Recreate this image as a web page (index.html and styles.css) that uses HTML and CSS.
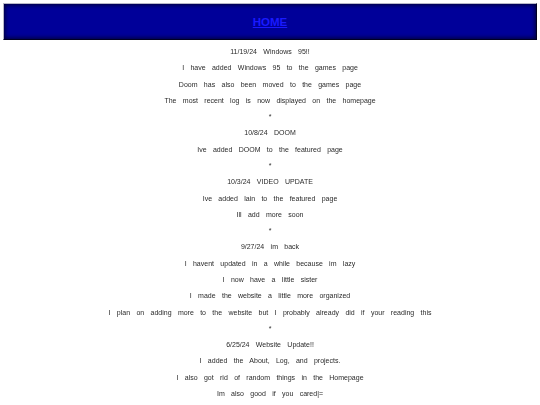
FILE: index.html
```html
<!DOCTYPE html>
<html>
<head>
<meta charset="utf-8">
<link rel="stylesheet" href="styles.css">
</head>
<body>
<header class="topbar"><a class="home" href="#">HOME</a></header>
<main class="log">
<p>11/19/24 Windows 95!!</p>
<p>I have added Windows 95 to the games page</p>
<p>Doom has also been moved to the games page</p>
<p>The most recent log is now displayed on the homepage</p>
<p>*</p>
<p>10/8/24 DOOM</p>
<p>Ive added DOOM to the featured page</p>
<p>*</p>
<p>10/3/24 VIDEO UPDATE</p>
<p>Ive added lain to the featured page</p>
<p>Ill add more soon</p>
<p>*</p>
<p>9/27/24 im back</p>
<p>I havent updated in a while because im lazy</p>
<p>I now have a little sister</p>
<p>I made the website a little more organized</p>
<p>I plan on adding more to the website but I probably already did if your reading this</p>
<p>*</p>
<p>6/25/24 Website Update!!</p>
<p>I added the About, Log, and projects.</p>
<p>I also got rid of random things in the Homepage</p>
<p>Im also good if you cared|=</p>
</main>
</body>
</html>
```
FILE: styles.css
```css
html, body { margin: 0; padding: 0; background: #fff; }
body { padding: 3px; font-family: "Liberation Sans", Arial, sans-serif; }
.topbar {
  height: 35px;
  background: #000099;
  border-top: 1px solid #b8b8c8;
  border-left: 1px solid #b8b8c8;
  border-right: 1px solid #000022;
  border-bottom: 1px solid #000022;
  box-shadow: inset 0 0 4px 1px #000033;
  display: flex;
  align-items: center;
  justify-content: center;
}
.home {
  color: #1a1aff;
  font-size: 11.5px;
  font-weight: bold;
  text-decoration: underline;
}
.log {
  padding-top: 4px;
  text-align: center;
  will-change: transform;
}
.log p {
  margin: 0;
  font-size: 7px;
  line-height: 16.28px;
  word-spacing: 4.4px;
  color: #2a2a2a;
}
```
